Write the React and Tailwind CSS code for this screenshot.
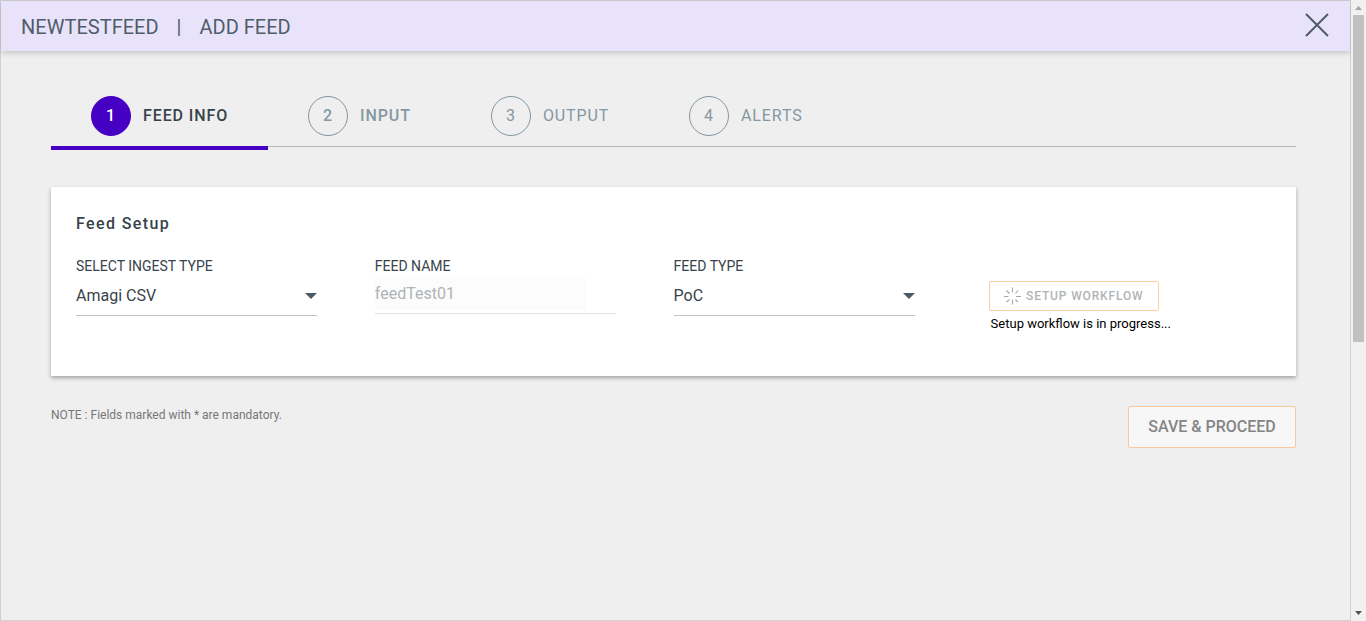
const steps = [
  { n: 1, label: "FEED INFO", tab: "w-[217px] h-[54px] border-b-4 border-[#4600c4]", circle: "border-[#4600c4] bg-[#4600c4] text-white font-medium", text: "text-[#37434a] font-medium tracking-[0.9px]" },
  { n: 2, label: "INPUT", tab: "w-[183px] h-[50px]", circle: "border-[#8497a3] text-[#8497a3] font-medium", text: "text-[#8497a3] font-medium tracking-[0.9px]" },
  { n: 3, label: "OUTPUT", tab: "w-[198px] h-[50px]", circle: "border-[#8497a3] text-[#8497a3]", text: "text-[#8497a3] tracking-[0.850px]" },
  { n: 4, label: "ALERTS", tab: "w-[194px] h-[50px]", circle: "border-[#8497a3] text-[#8497a3]", text: "text-[#8497a3] tracking-[0.9px]" },
];

function Tabs() {
  return (
    <nav className="mt-[45px] flex h-[51px] items-start border-b border-[#b9b9bb]">
      {steps.map((s) => (
        <div key={s.n} className={`flex shrink-0 items-start gap-3 pl-10 ${s.tab}`}>
          <span className={`flex size-10 shrink-0 items-center justify-center rounded-full border pr-[1px] leading-[38px] ${s.circle}`}>{s.n}</span>
          <span className={`leading-[40px] whitespace-nowrap ${s.text}`}>{s.label}</span>
        </div>
      ))}
    </nav>
  );
}

function Select({ label, value }) {
  return (
    <div className="w-[241px]">
      <div className="text-sm leading-5 text-[#37434a]">{label}</div>
      <div className="flex h-10 items-center justify-between border-b border-[#bcc4c9] text-base text-[#37434a]">
        <span>{value}</span>
        <svg width="12" height="6" viewBox="0 0 12 6" className="text-[#4c5a66]">
          <path d="M0 0h12L6 6z" fill="currentColor" />
        </svg>
      </div>
    </div>
  );
}

function Spinner() {
  return (
    <svg width="18" height="18" viewBox="0 0 18 18" fill="none" stroke="#a3a8ab" strokeWidth="1.1">
      <path d="M9.500 .5v5M9.500 12.500v5M1 9.500h4.500M13 9.500h5M3.500 3.500l3 3M12.500 12.500l2.500 2.500M3.500 15l3-2.500M12.500 6.500l2.500-3" />
    </svg>
  );
}

function Scrollbar() {
  return (
    <div className="flex w-[15px] flex-col items-center justify-between bg-[#f1f1f1]">
      <div className="flex flex-col items-center">
        <svg width="15" height="15" viewBox="0 0 15 15">
          <path d="M4 10h7L7.5 6z" fill="#a3a3a3" />
        </svg>
        <div className="h-[327px] w-[11px] bg-[#c1c1c1]" />
      </div>
      <svg width="15" height="15" viewBox="0 0 15 15">
        <path d="M4 5h7L7.500 9z" fill="#505050" />
      </svg>
    </div>
  );
}

export default function App() {
  return (
    <div className="flex h-[621px] w-[1366px] overflow-hidden bg-[#efefef] font-['Roboto',sans-serif] text-base">
      <div className="flex w-[1351px] flex-col border border-[#d0d0d2]">
        <header className="flex h-[50px] items-center justify-between bg-[#e8e3fa] pr-[21px] pl-5 text-xl text-[#4f5d68] shadow-[0_2px_6px_rgba(0,0,0,0.18)]">
          <div className="flex items-center pt-[2px]">
            <span className="w-[155.500px]">NEWTESTFEED</span>
            <span className="w-[23px]">|</span>
            <span>ADD FEED</span>
          </div>
          <svg width="24" height="24" viewBox="0 0 24 24" fill="none" stroke="#4f5d68" strokeWidth="2" className="mb-[2px]">
            <path d="M1 1l22 22M23 1L1 23" />
          </svg>
        </header>
        <main className="w-[1295px] pl-[50px]">
          <Tabs />
          <section className="mt-10 h-[189px] bg-white px-[25px] pt-[25px] shadow-[0_2px_4px_rgba(0,0,0,0.32)]">
            <h2 className="leading-6 font-medium tracking-[1.4px] text-[#37434a]">Feed Setup</h2>
            <div className="mt-5 flex">
              <div className="w-[298.800px]">
                <Select label="SELECT INGEST TYPE" value="Amagi CSV" />
              </div>
              <div className="w-[298.800px]">
                <div className="text-sm leading-5 text-[#37434a]">FEED NAME</div>
                <div className="h-[38px] w-[241px] border-b border-[#e0e2e3]">
                  <div className="h-[34px] w-[211px] bg-[#fcfcfc] leading-[35px] text-[#afb4b6]">feedTest01</div>
                </div>
              </div>
              <Select label="FEED TYPE" value="PoC" />
              <div className="ml-[74px] pt-[25px]">
                <button className="flex h-[30px] w-[170px] items-center gap-[5.500px] rounded-[2px] border border-[#fdcfa5] pl-[13px] text-xs font-medium tracking-[0.850px] whitespace-nowrap text-[#afb4b6]">
                  <Spinner />
                  SETUP WORKFLOW
                </button>
                <div className="pt-[3px] pl-[2px] text-[13px] leading-5 whitespace-nowrap text-black">Setup workflow is in progress...</div>
              </div>
            </div>
          </section>
          <footer className="mt-[30px] flex items-start justify-between">
            <span className="text-xs leading-[18px] text-[#77777a]">NOTE : Fields marked with * are mandatory.</span>
            <button className="h-[42px] w-[168px] rounded-[2px] border border-[#fbc89c] bg-[#f7f7f7] font-medium text-[#858585]">SAVE &amp; PROCEED</button>
          </footer>
        </main>
      </div>
      <Scrollbar />
    </div>
  );
}
